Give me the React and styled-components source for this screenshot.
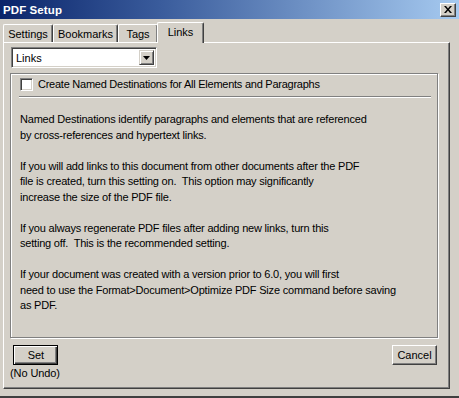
import React from 'react'
import styled, { createGlobalStyle } from 'styled-components'

const GlobalStyle = createGlobalStyle`
  html, body {
    margin: 0;
    padding: 0;
    background: #d4d0c8;
  }
  body {
    font-family: "Liberation Sans", Arial, sans-serif;
    font-size: 11px;
    color: #000;
  }
`

const Window = styled.div`
  width: 459px;
  height: 398px;
  box-sizing: border-box;
  background: #d4d0c8;
  display: flex;
  flex-direction: column;
  box-shadow: inset 0 -2px 0 #404040, inset 0 -1px 0 #808080;
`

const TitleBar = styled.div`
  height: 19px;
  display: flex;
  align-items: center;
  justify-content: space-between;
  padding: 0 3px 0 3px;
  background: linear-gradient(90deg, #0a246a 0%, #3a5c9c 35%, #a6caf0 100%);
`

const Title = styled.span`
  color: #fff;
  font-weight: bold;
  font-size: 11.5px;
  letter-spacing: 0.1px;
`

const CloseButton = styled.div`
  width: 16px;
  height: 14px;
  box-sizing: border-box;
  background: #d4d0c8;
  border: 1px solid;
  border-color: #fff #404040 #404040 #fff;
  box-shadow: inset -1px -1px 0 #808080;
  display: flex;
  align-items: center;
  justify-content: center;
`

const TabStrip = styled.div`
  display: flex;
  align-items: flex-end;
  height: 21px;
  margin-top: 2px;
  padding-left: 3px;
  position: relative;
  z-index: 1;
`

const Tab = styled.div`
  box-sizing: border-box;
  width: ${p => p.$w}px;
  height: ${p => (p.$active ? 21 : 18)}px;
  margin-bottom: ${p => (p.$active ? -1 : 0)}px;
  margin-left: ${p => (p.$active ? -1 : 0)}px;
  margin-right: ${p => (p.$active ? -1 : 0)}px;
  padding-bottom: ${p => (p.$active ? 3 : 0)}px;
  display: flex;
  align-items: center;
  justify-content: center;
  font-size: 11px;
  background: #d4d0c8;
  border-top: 1px solid #fff;
  border-left: 1px solid #fff;
  border-right: 1px solid #404040;
  border-radius: 2px 2px 0 0;
  box-shadow: inset -1px 0 0 #808080;
`

const Panel = styled.div`
  width: 447px;
  height: 347px;
  margin-left: 3px;
  box-sizing: border-box;
  border: 1px solid;
  border-color: #fff #404040 #404040 #fff;
  box-shadow: inset -1px -1px 0 #808080;
  padding: 4px 0 0 6px;
  display: flex;
  flex-direction: column;
`

const Select = styled.div`
  width: 146px;
  height: 21px;
  margin-left: 1px;
  box-sizing: border-box;
  background: #fff;
  border: 1px solid;
  border-color: #808080 #fff #fff #808080;
  box-shadow: inset 1px 1px 0 #404040, inset -1px -1px 0 #d4d0c8;
  display: flex;
  align-items: center;
  justify-content: space-between;
  padding: 2px 2px 2px 4px;
  font-size: 11px;
`

const SelectArrow = styled.div`
  width: 15px;
  height: 15px;
  box-sizing: border-box;
  background: #d4d0c8;
  border: 1px solid;
  border-color: #d4d0c8 #404040 #404040 #d4d0c8;
  box-shadow: inset 1px 1px 0 #fff, inset -1px -1px 0 #808080;
  display: flex;
  align-items: center;
  justify-content: center;
`

const GroupBox = styled.div`
  width: 428px;
  height: 265px;
  margin-top: 5px;
  box-sizing: border-box;
  border: 1px solid #808080;
  box-shadow: inset 1px 1px 0 #fff, 1px 1px 0 #fff;
  padding: 3px 6px 0 9px;
`

const CheckRow = styled.label`
  display: flex;
  align-items: center;
  gap: 5px;
  height: 14px;
  font-size: 11px;
  letter-spacing: -0.25px;
`

const CheckBox = styled.span`
  width: 13px;
  height: 13px;
  box-sizing: border-box;
  background: #fff;
  border: 1px solid;
  border-color: #808080 #fff #fff #808080;
  box-shadow: inset 1px 1px 0 #404040, inset -1px -1px 0 #d4d0c8;
`

const Separator = styled.div`
  height: 1px;
  margin: 5px 0 0 -1px;
  background: #808080;
  border-bottom: 1px solid #fff;
`

const Text = styled.div`
  margin-top: 14px;
  font-size: 11px;
  line-height: 15.5px;
  letter-spacing: -0.2px;

  p {
    margin: 0 0 15.5px 0;
  }
`

const ButtonRow = styled.div`
  display: flex;
  justify-content: space-between;
  align-items: flex-start;
  padding: 7px 12px 0 0;
`

const ButtonGroup = styled.div`
  display: flex;
  flex-direction: column;
  align-items: center;
  gap: 2px;
`

const Button = styled.button`
  width: 45px;
  height: 20px;
  box-sizing: border-box;
  padding: 0;
  font-family: inherit;
  font-size: 11px;
  color: #000;
  background: #d4d0c8;
  border: 1px solid;
  border-color: ${p => (p.$default ? '#000' : '#fff #404040 #404040 #fff')};
  box-shadow: ${p =>
    p.$default
      ? 'inset 1px 1px 0 #fff, inset -1px -1px 0 #404040, inset -2px -2px 0 #808080'
      : 'inset -1px -1px 0 #808080'};
  transform: ${p => (p.$default ? 'translateX(1px)' : 'none')};
`

const Note = styled.span`
  font-size: 11px;
  letter-spacing: -0.1px;
`

export default function App() {
  return (
    <>
      <GlobalStyle />
      <Window>
        <TitleBar>
          <Title>PDF Setup</Title>
          <CloseButton>
            <svg width="8" height="7" viewBox="0 0 8 7">
              <path d="M0 0h2l2 2.5L6 0h2L5 3.5 8 7H6L4 4.5 2 7H0l3-3.5z" fill="#000" />
            </svg>
          </CloseButton>
        </TitleBar>
        <TabStrip>
          <Tab $w={50}>Settings</Tab>
          <Tab $w={65}>Bookmarks</Tab>
          <Tab $w={40}>Tags</Tab>
          <Tab $w={47} $active>Links</Tab>
        </TabStrip>
        <Panel>
          <Select>
            <span>Links</span>
            <SelectArrow>
              <svg width="7" height="4" viewBox="0 0 7 4">
                <path d="M0 0h7L3.5 4z" fill="#000" />
              </svg>
            </SelectArrow>
          </Select>
          <GroupBox>
            <CheckRow>
              <CheckBox />
              Create Named Destinations for All Elements and Paragraphs
            </CheckRow>
            <Separator />
            <Text>
              <p>
                Named Destinations identify paragraphs and elements that are referenced
                <br />
                by cross-references and hypertext links.
              </p>
              <p>
                If you will add links to this document from other documents after the PDF
                <br />
                file is created, turn this setting on.&nbsp; This option may significantly
                <br />
                increase the size of the PDF file.
              </p>
              <p>
                If you always regenerate PDF files after adding new links, turn this
                <br />
                setting off.&nbsp; This is the recommended setting.
              </p>
              <p>
                If your document was created with a version prior to 6.0, you will first
                <br />
                need to use the Format&gt;Document&gt;Optimize PDF Size command before saving
                <br />
                as PDF.
              </p>
            </Text>
          </GroupBox>
          <ButtonRow>
            <ButtonGroup>
              <Button $default>Set</Button>
              <Note>(No Undo)</Note>
            </ButtonGroup>
            <Button>Cancel</Button>
          </ButtonRow>
        </Panel>
      </Window>
    </>
  )
}
